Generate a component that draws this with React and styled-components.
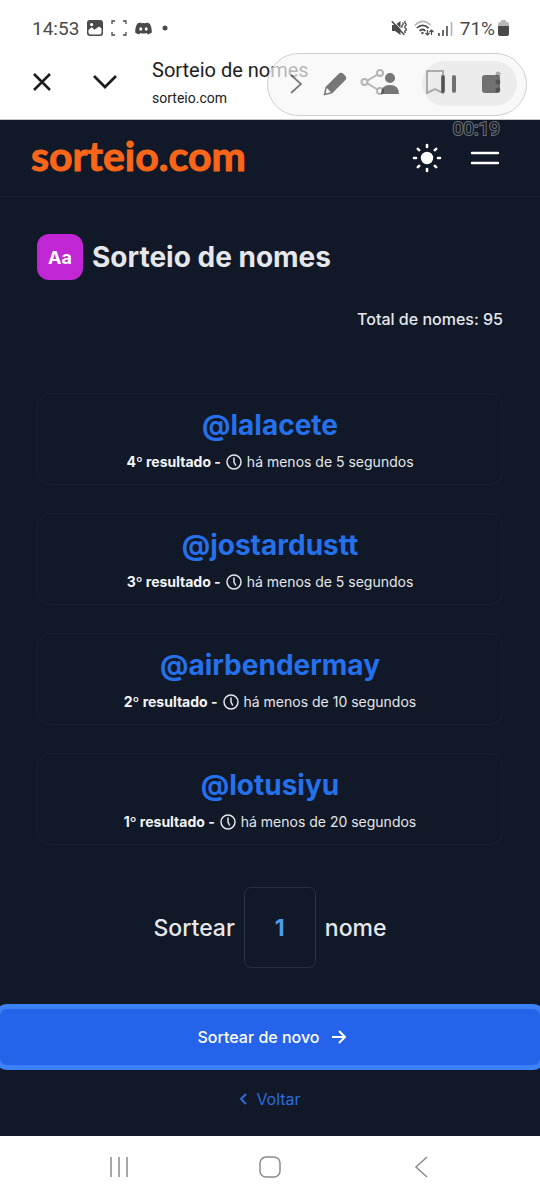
import React, { useState } from "react";
import styled, { createGlobalStyle } from "styled-components";

const GlobalStyle = createGlobalStyle`
  * {
    box-sizing: border-box;
  }

  body {
    margin: 0;
    background: #fff;
    font-family: Inter, "Noto Sans", sans-serif;
  }

  button {
    padding: 0;
    border: 0;
    background: none;
    color: inherit;
    font: inherit;
    cursor: pointer;
  }

  svg {
    display: block;
    flex: none;
  }
`;

const Screen = styled.div`
  position: relative;
  display: flex;
  flex-direction: column;
  min-height: 100vh;
  overflow: hidden;
`;

const StatusBar = styled.div`
  display: flex;
  align-items: center;
  justify-content: space-between;
  height: 56px;
  padding: 0 31px 0 32px;
  color: #4a4a4a;
  font-family: Roboto, sans-serif;
  font-size: 19px;
`;

const StatusGroup = styled.div`
  display: flex;
  align-items: center;
  gap: ${(props) => props.$gap}px;
`;

const BrowserBar = styled.div`
  display: flex;
  align-items: center;
  height: 64px;
  padding: 0 30px 12px;
  border-bottom: 1px solid #c3c8d0;
  color: #1c1c1e;
  font-family: Roboto, sans-serif;
`;

const BarButton = styled.button`
  display: flex;
  align-items: center;
  justify-content: center;
  width: 24px;
  height: 28px;
`;

const BarGroup = styled.div`
  display: flex;
  gap: 39px;
`;

const PageInfo = styled.div`
  flex: 1;
  min-width: 0;
  padding: 4px 0 0 35px;
  white-space: nowrap;

  .title {
    font-size: 20px;
    line-height: 28px;
  }

  .url {
    font-size: 14px;
    line-height: 28px;
  }
`;

const Recorder = styled.div`
  position: absolute;
  top: 53px;
  right: 13px;
  display: flex;
  align-items: center;
  width: 260px;
  height: 63px;
  padding: 0 9px 2px 16px;
  border: 1px solid #cfcfcf;
  border-radius: 32px;
  background: rgba(247, 247, 247, 0.7);
  color: rgba(0, 0, 0, 0.52);
`;

const RecorderTools = styled.div`
  display: flex;
  flex: 1;
  align-items: center;
  gap: 15px;

  button:last-child {
    margin-left: 16px;
  }
`;

const RecorderControls = styled.div`
  display: flex;
  align-items: center;
  justify-content: space-between;
  width: 95px;
  height: 45px;
  padding: 0 14px;
  border-radius: 23px;
  background: rgba(0, 0, 0, 0.05);
`;

const Timer = styled.div`
  position: absolute;
  top: 117px;
  right: 40px;
  color: #111827;
  font-family: Roboto, sans-serif;
  font-size: 19px;
  line-height: 24px;
  -webkit-text-stroke: 2px #6c7079;
  paint-order: stroke fill;
`;

const Site = styled.div`
  display: flex;
  flex: 1;
  flex-direction: column;
  background: #111827;
  color: #e5e7eb;
`;

const SiteHeader = styled.header`
  display: flex;
  align-items: center;
  justify-content: space-between;
  height: 77px;
  padding: 0 40px 0 31px;
  border-bottom: 1px solid #17232f;
`;

const Logo = styled.a`
  padding-bottom: 5px;
  color: #f9661a;
  font-family: Lato, sans-serif;
  font-size: 41px;
  font-weight: 700;
  line-height: 48px;
  text-decoration: none;
  -webkit-text-stroke: 1px #f9661a;
`;

const HeaderActions = styled.div`
  display: flex;
  align-items: center;
  gap: 28px;
  color: #fff;
`;

const Content = styled.main`
  padding: 37px 37px 0;
`;

const TitleRow = styled.div`
  display: flex;
  align-items: center;
  gap: 9px;
`;

const Badge = styled.span`
  display: flex;
  align-items: center;
  justify-content: center;
  width: 46px;
  height: 46px;
  border-radius: 12px;
  background: #c026d3;
  color: #fff;
  font-size: 18px;
  font-weight: 700;
`;

const Title = styled.h1`
  margin: 0;
  font-size: 28px;
  font-weight: 700;
  line-height: 36px;
`;

const Total = styled.p`
  margin: 27px 0 62px;
  font-size: 16px;
  font-weight: 500;
  line-height: 24px;
  text-align: right;
`;

const Results = styled.ul`
  display: flex;
  flex-direction: column;
  gap: 28px;
  margin: 0;
  padding: 0;
  list-style: none;
`;

const Card = styled.li`
  display: flex;
  flex-direction: column;
  align-items: center;
  height: 92px;
  padding-top: 13px;
  border: 1px solid #17242f;
  border-radius: 14px;
`;

const Winner = styled.strong`
  color: #2570eb;
  font-size: 28px;
  font-weight: 700;
  line-height: 36px;
`;

const Meta = styled.div`
  display: flex;
  align-items: center;
  gap: 5px;
  margin-top: 8px;
  font-size: 14px;
  line-height: 22px;

  strong {
    color: #f3f4f6;
    font-weight: 700;
  }
`;

const Amount = styled.label`
  display: flex;
  align-items: center;
  justify-content: center;
  gap: 9px;
  margin: 42px 0 36px;
  font-size: 23px;
  font-weight: 500;

  input {
    width: 72px;
    height: 81px;
    padding: 0;
    border: 1px solid #25333f;
    border-radius: 7px;
    outline: none;
    background: transparent;
    color: #4f9bf0;
    font: inherit;
    font-weight: 700;
    text-align: center;
  }
`;

const DrawButton = styled.button`
  && {
    display: flex;
    align-items: center;
    justify-content: center;
    gap: 13px;
    width: 100%;
    height: 56px;
    margin-top: 5px;
    padding-left: 4px;
    border-radius: 7px;
    background: #2563eb;
    box-shadow: 0 0 0 5px #3b82f6;
    color: #fff;
    font-size: 16px;
    font-weight: 500;
  }
`;

const BackLink = styled.a`
  display: flex;
  align-items: center;
  align-self: center;
  gap: 9px;
  margin: 22px 0 23px;
  color: #2c6bdb;
  font-size: 16px;
  line-height: 24px;
  text-decoration: none;
`;

const NavBar = styled.nav`
  display: flex;
  align-items: center;
  justify-content: space-between;
  height: 63px;
  padding: 0 107px 2px;
  color: #8b8b8b;
`;

const Icon = ({ w, h, children, ...rest }) => (
  <svg
    width={w}
    height={h}
    viewBox={`0 0 ${w} ${h}`}
    fill="none"
    stroke="currentColor"
    strokeWidth="2"
    aria-hidden="true"
    {...rest}
  >
    {children}
  </svg>
);

const PictureIcon = () => (
  <Icon w={16} h={16} stroke="none">
    <rect width="16" height="16" rx="3" fill="currentColor" />
    <circle cx="4.6" cy="4.6" r="1.6" fill="#fff" />
    <path d="M1.5 12.5V10l3.3-2.8 2.7 2.6 4.6-3.4 2.4 2v4.1q0 2-2 2h-9q-2 0-2-2z" fill="#fff" />
  </Icon>
);

const CaptureIcon = () => (
  <Icon w={16} h={16} strokeWidth="1.3">
    <path d="M1 4V1h3M12 1h3v3M15 12v3h-3M4 15H1v-3" />
  </Icon>
);

const DiscordIcon = () => (
  <Icon w={17} h={13} stroke="none">
    <path
      fill="currentColor"
      fillRule="evenodd"
      d="M5.8.4C4.3.6 3 1 2.4 1.4 1 3.6 0 7 .2 10.6c1.2 1 2.5 1.5 4.1 1.9l.9-1.5c2.2.7 4.4.7 6.6 0l.9 1.5c1.6-.4 2.9-.9 4.1-1.9.2-3.6-.8-7-2.2-9.2C13.8 1 12.7.6 11.2.4l-.5.9a13 13 0 0 0-4.4 0zM5.8 5.3a1.5 1.7 0 1 0 0 3.4 1.5 1.7 0 0 0 0-3.4m5.4 0a1.5 1.7 0 1 0 0 3.4 1.5 1.7 0 0 0 0-3.4"
    />
  </Icon>
);

const MuteIcon = () => (
  <Icon w={16} h={16} strokeWidth="1.5">
    <path d="M1 5h3l5.5-4v14L4 11H1z" fill="currentColor" stroke="none" />
    <path d="M2 .5l12 13" stroke="#fff" strokeWidth="1" />
    <path d="M.8 1.2l12.5 13.5" />
    <path
      d="M11.500 2.500q1.500 1 0 2.500t0 2.500M14.500 1q-1.500 1.200 0 2.400t0 2.400 0 2.400 0 2.400 0 2.400"
      strokeWidth="1.3"
    />
  </Icon>
);

const WifiIcon = () => (
  <Icon w={20} h={16} strokeWidth="1.7">
    <path d="M.8 5.5Q8.5-2.5 16.5 5" stroke="#b5b5b5" />
    <path d="M2.8 8q5.800-5.400 11.700 0M5.500 11q3-3 6 0" />
    <circle cx="8.5" cy="13" r="1.2" fill="currentColor" stroke="none" />
    <path d="M13.500 10v5m-2-2l2 2 2-2M17.500 15v-5m-2 2l2-2 2 2" strokeWidth="1.2" />
  </Icon>
);

const SignalIcon = () => (
  <Icon w={15} h={15} strokeWidth="1.6">
    <path d="M1 15v-3M5 15V9M9 15V5" />
    <path d="M13.500 15V1" stroke="#b5b5b5" />
  </Icon>
);

const BatteryIcon = () => (
  <Icon w={11} h={16} stroke="none">
    <path d="M3 2V1q0-1 1-1h3q1 0 1 1v1h1q2 0 2 2v4H0V4q0-2 2-2z" fill="#b9b9b9" />
    <path d="M0 6h11v8q0 2-2 2H2q-2 0-2-2z" fill="currentColor" />
  </Icon>
);

const ClockIcon = () => (
  <Icon w={16} h={16} strokeWidth="1.5" strokeLinecap="round">
    <circle cx="8" cy="8" r="7" />
    <path d="M8 4v4l1.500 3" />
  </Icon>
);

const SunIcon = () => (
  <Icon w={30} h={30} strokeWidth="2.6" strokeLinecap="round">
    <circle cx="15" cy="15" r="6.2" fill="currentColor" stroke="none" />
    <path d="M15 2v2M15 26v2M2 15h2M26 15h2M5.800 5.800l1.400 1.400M22.800 22.800l1.400 1.400M5.800 24.200l1.400-1.400M22.800 7.200l1.400-1.400" />
  </Icon>
);

const results = [
  { place: 4, name: "@lalacete", time: "há menos de 5 segundos" },
  { place: 3, name: "@jostardustt", time: "há menos de 5 segundos" },
  { place: 2, name: "@airbendermay", time: "há menos de 10 segundos" },
  { place: 1, name: "@lotusiyu", time: "há menos de 20 segundos" },
];

const PhoneStatus = () => (
  <StatusBar>
    <StatusGroup $gap={8}>
      <span>14:53</span>
      <PictureIcon />
      <CaptureIcon />
      <DiscordIcon />
      <Icon w={10} h={6} stroke="none">
        <circle cx="5" cy="3" r="2.5" fill="currentColor" />
      </Icon>
    </StatusGroup>
    <StatusGroup $gap={7}>
      <MuteIcon />
      <StatusGroup $gap={4}>
        <WifiIcon />
        <SignalIcon />
      </StatusGroup>
      <StatusGroup $gap={3}>
        <span>71%</span>
        <BatteryIcon />
      </StatusGroup>
    </StatusGroup>
  </StatusBar>
);

const Browser = () => (
  <BrowserBar>
    <BarGroup>
      <BarButton aria-label="Fechar">
        <Icon w={18} h={18} strokeWidth="2.5">
          <path d="M1 1l16 16M17 1L1 17" />
        </Icon>
      </BarButton>
      <BarButton aria-label="Minimizar">
        <Icon w={24} h={14} strokeWidth="2.7">
          <path d="M1 1l11 11L23 1" />
        </Icon>
      </BarButton>
    </BarGroup>
    <PageInfo>
      <div className="title">Sorteio de nomes</div>
      <div className="url">sorteio.com</div>
    </PageInfo>
    <BarGroup>
      <BarButton aria-label="Compartilhar">
        <Icon w={24} h={26}>
          <circle cx="4.5" cy="13" r="3" />
          <circle cx="20" cy="4" r="3" />
          <circle cx="20" cy="22" r="3" />
          <path d="M7.500 11.500l10-6M7.500 14.500l10 6" />
        </Icon>
      </BarButton>
      <BarButton aria-label="Salvar">
        <Icon w={18} h={24}>
          <path d="M1 1h16v22l-8-4-8 4z" />
        </Icon>
      </BarButton>
      <BarButton aria-label="Mais opções">
        <Icon w={6} h={22} stroke="none">
          <circle cx="3" cy="3" r="2.5" fill="currentColor" />
          <circle cx="3" cy="11" r="2.5" fill="currentColor" />
          <circle cx="3" cy="19" r="2.5" fill="currentColor" />
        </Icon>
      </BarButton>
    </BarGroup>
  </BrowserBar>
);

const ScreenRecorder = () => (
  <>
    <Recorder>
      <RecorderTools>
        <BarButton aria-label="Recolher">
          <Icon w={12} h={20} strokeWidth="1.7">
            <path d="M1 1l10 9-10 9" />
          </Icon>
        </BarButton>
        <BarButton aria-label="Desenhar">
          <Icon w={24} h={24} stroke="none">
            <path
              fill="currentColor"
              fillRule="evenodd"
              d="M.5 23.500L2.500 15 15.500 2q2.500-2.500 5 0l1.500 1.500q2.500 2.500 0 5L9 21.500zM3.800 16l-1.200 5.400L8 20.200z"
            />
          </Icon>
        </BarButton>
        <BarButton aria-label="Câmera">
          <Icon w={24} h={22} stroke="none">
            <circle cx="12" cy="5" r="5" fill="currentColor" />
            <path d="M3 21q0-9 9-9t9 9z" fill="currentColor" />
          </Icon>
        </BarButton>
      </RecorderTools>
      <RecorderControls>
        <BarButton aria-label="Pausar">
          <Icon w={16} h={20} strokeWidth="4" strokeLinecap="round">
            <path d="M3 3v14M14 3v14" />
          </Icon>
        </BarButton>
        <BarButton aria-label="Parar">
          <Icon w={20} h={20} stroke="none">
            <rect x="1" y="1" width="18" height="18" rx="3" fill="currentColor" />
          </Icon>
        </BarButton>
      </RecorderControls>
    </Recorder>
    <Timer>00:19</Timer>
  </>
);

const App = () => {
  const [amount, setAmount] = useState("1");

  return (
    <Screen>
      <GlobalStyle />
      <PhoneStatus />
      <Browser />
      <Site>
        <SiteHeader>
          <Logo href="#">sorteio.com</Logo>
          <HeaderActions>
            <button aria-label="Tema">
              <SunIcon />
            </button>
            <button aria-label="Menu">
              <Icon w={30} h={16} strokeWidth="2.4" strokeLinecap="round">
                <path d="M2 3h26M2 13h26" />
              </Icon>
            </button>
          </HeaderActions>
        </SiteHeader>
        <Content>
          <TitleRow>
            <Badge>Aa</Badge>
            <Title>Sorteio de nomes</Title>
          </TitleRow>
          <Total>Total de nomes: 95</Total>
          <Results>
            {results.map((item) => (
              <Card key={item.place}>
                <Winner>{item.name}</Winner>
                <Meta>
                  <strong>{item.place}º resultado -</strong>
                  <ClockIcon />
                  <span>{item.time}</span>
                </Meta>
              </Card>
            ))}
          </Results>
          <Amount>
            Sortear
            <input
              type="text"
              inputMode="numeric"
              value={amount}
              onChange={(e) => setAmount(e.target.value)}
            />
            nome
          </Amount>
        </Content>
        <DrawButton>
          Sortear de novo
          <Icon w={14} h={14}>
            <path d="M0 7h13M7 1l6 6-6 6" />
          </Icon>
        </DrawButton>
        <BackLink href="#">
          <Icon w={8} h={12}>
            <path d="M7 1L2 6l5 5" />
          </Icon>
          Voltar
        </BackLink>
      </Site>
      <NavBar>
        <BarButton aria-label="Recentes">
          <Icon w={20} h={20} strokeWidth="1.5">
            <path d="M2 0v20M10 0v20M18 0v20" />
          </Icon>
        </BarButton>
        <BarButton aria-label="Início">
          <Icon w={22} h={22} strokeWidth="1.5">
            <rect x="1" y="1" width="20" height="20" rx="6" />
          </Icon>
        </BarButton>
        <BarButton aria-label="Voltar">
          <Icon w={14} h={22} strokeWidth="1.5">
            <path d="M13 1L2 11l11 10" />
          </Icon>
        </BarButton>
      </NavBar>
      <ScreenRecorder />
    </Screen>
  );
};

export default App;
